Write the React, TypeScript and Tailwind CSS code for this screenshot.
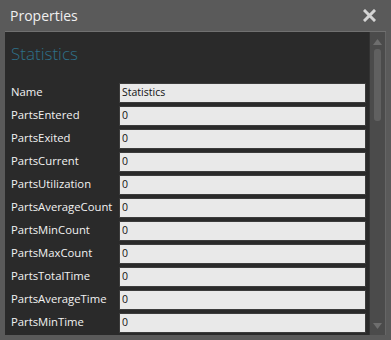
import React from "react";

const rows: [string, string][] = [
  ["Name", "Statistics"],
  ["PartsEntered", "0"],
  ["PartsExited", "0"],
  ["PartsCurrent", "0"],
  ["PartsUtilization", "0"],
  ["PartsAverageCount", "0"],
  ["PartsMinCount", "0"],
  ["PartsMaxCount", "0"],
  ["PartsTotalTime", "0"],
  ["PartsAverageTime", "0"],
  ["PartsMinTime", "0"],
];

export default function App() {
  return (
    <div
      className="w-[391px] h-[340px] bg-[#5a5a5a] flex flex-col overflow-hidden"
      style={{ fontFamily: '"Open Sans", "Noto Sans", sans-serif' }}
    >
      <div className="h-[31px] flex items-center justify-between pl-[10px] pr-[15px] shrink-0">
        <span className="text-[14px] text-[#f0f0f0] leading-none">Properties</span>
        <svg width="13" height="13" viewBox="0 0 13 13">
          <path d="M2 2 L11 11 M11 2 L2 11" stroke="#d4d4d4" strokeWidth="3" strokeLinecap="square" />
        </svg>
      </div>
      <div className="mx-[5px] h-[304px] border-t border-[#707070] bg-[#2a2a2a] flex overflow-hidden">
        <div className="flex-1 overflow-hidden">
          <div className="pl-[6px] pt-[13px] h-[49px] text-[17px] font-light text-[#2e7089] leading-none">
            Statistics
          </div>
          <div className="flex flex-col">
            {rows.map(([k, v]) => (
              <div key={k} className="h-[23px] flex items-center">
                <div className="w-[114px] pl-[6px] text-[11.3px] text-[#f2f2f2] whitespace-nowrap">{k}</div>
                <div className="w-[247px] h-[20px] bg-[#e9e9e9] border border-[#3c3c3c] flex items-center pl-[2px] text-[10.5px] text-[#111]">
                  {v}
                </div>
              </div>
            ))}
          </div>
        </div>
        <div className="w-[17px] bg-[#4b4b4b] border-l border-[#333] border-r border-r-[#666] flex flex-col items-center">
          <svg width="9" height="6" viewBox="0 0 9 6" className="mt-[7px]">
            <path d="M4.5 0 L9 6 L0 6 Z" fill="#6e6e6e" />
          </svg>
          <div className="mt-[4px] w-[7px] h-[72px] rounded-[3px] bg-[#606060]" />
          <div className="flex-1" />
          <svg width="9" height="6" viewBox="0 0 9 6" className="mb-[6px]">
            <path d="M0 0 L9 0 L4.5 6 Z" fill="#6e6e6e" />
          </svg>
        </div>
      </div>
    </div>
  );
}
